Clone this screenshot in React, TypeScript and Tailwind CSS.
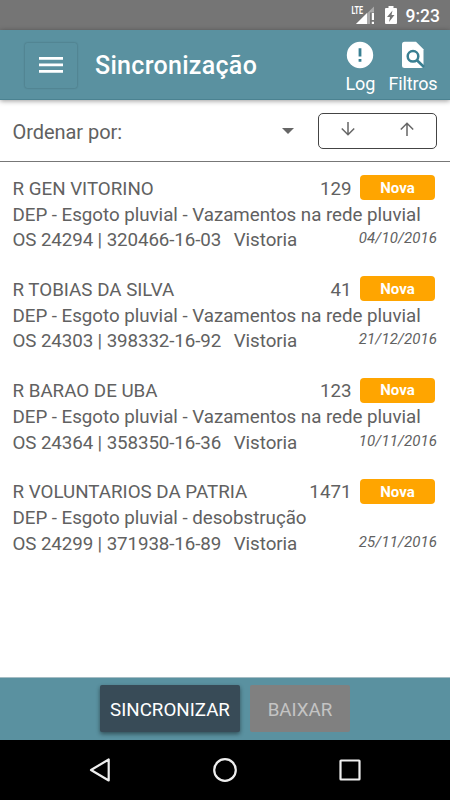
import React from 'react';

type Order = { street: string; number: string; service: string; code: string; date: string };

const orders: Order[] = [
  { street: 'R GEN VITORINO', number: '129', service: 'DEP - Esgoto pluvial - Vazamentos na rede pluvial', code: 'OS 24294 | 320466-16-03', date: '04/10/2016' },
  { street: 'R TOBIAS DA SILVA', number: '41', service: 'DEP - Esgoto pluvial - Vazamentos na rede pluvial', code: 'OS 24303 | 398332-16-92', date: '21/12/2016' },
  { street: 'R BARAO DE UBA', number: '123', service: 'DEP - Esgoto pluvial - Vazamentos na rede pluvial', code: 'OS 24364 | 358350-16-36', date: '10/11/2016' },
  { street: 'R VOLUNTARIOS DA PATRIA', number: '1471', service: 'DEP - Esgoto pluvial - desobstrução', code: 'OS 24299 | 371938-16-89', date: '25/11/2016' },
];

function StatusBar() {
  return (
    <div className="flex h-[30px] shrink-0 items-center justify-end bg-[#757575] pr-[10px] text-white">
      <svg className="mr-[10px] h-[30px] w-[24px]" viewBox="0 0 24 30">
        <text x="0.5" y="14" fontSize="11" fontWeight="700" fontFamily="Roboto, sans-serif" fill="#fff" textLength="11.5" lengthAdjust="spacingAndGlyphs">LTE</text>
        <path d="M23 6.500v6h-4v11.500H5z" fill="#a9a9a9" />
        <path d="M16 13v11H5z" fill="#fff" />
        <path d="M20.800 13h2.200v7h-2.200zM20.800 21.700h2.200v2.300h-2.200z" fill="#fff" />
      </svg>
      <svg className="mr-[9px] h-[30px] w-[12px]" viewBox="0 0 12 30">
        <path d="M3.500 6h5v2H11q1 0 1 1v14q0 1-1 1H1q-1 0-1-1V9q0-1 1-1h2.500z" fill="#fff" />
        <path d="M7.500 10.500 2 17h3l-1 5 5.500-7H6.500z" fill="#757575" />
      </svg>
      <span className="pt-[1px] text-[17.500px] font-medium leading-[28px]">9:23</span>
    </div>
  );
}

function Header() {
  return (
    <header className="relative flex h-[70px] shrink-0 items-center bg-[#5a91a0] pl-[25px] text-white shadow-[0_1px_5px_rgba(0,0,0,0.4),inset_0_-1px_0_#4b8291]">
      <button aria-label="Menu" className="flex h-[45px] w-[52px] items-center justify-center rounded-[2px] shadow-[0_0_2px_rgba(0,0,0,0.3)]">
        <svg className="h-[16px] w-[24px]" viewBox="0 0 24 16" fill="#fff">
          <path d="M0 0h24v2.700H0zM0 6.500h24v2.700H0zM0 13h24v2.700H0z" />
        </svg>
      </button>
      <h1 className="ml-[18px] pt-[2px] text-[25px] font-medium leading-[30px] tracking-[0.300px]">Sincronização</h1>
      <div className="ml-auto flex gap-[13px] pr-[12.500px] pt-[7px]">
        <div className="flex flex-col items-center">
          <svg className="h-[30px] w-[30px]" viewBox="0 0 30 30">
            <circle cx="15" cy="15" r="13.200" fill="#fff" />
            <path d="M13.600 8.200h2.800v8.300h-2.800zM13.600 19h2.800v2.800h-2.800z" fill="#397f92" />
          </svg>
          <span className="text-[18px] leading-[28px]">Log</span>
        </div>
        <div className="flex flex-col items-center">
          <svg className="h-[30px] w-[30px]" viewBox="0 0 30 30">
            <path d="M6.500 1.800H18l7.500 7.500v16.200q0 2.500-2.500 2.500H6.500Q4 28 4 25.500V4.300Q4 1.800 6.500 1.800z" fill="#fff" />
            <circle cx="15" cy="16.300" r="5.300" fill="none" stroke="#397f92" strokeWidth="2.500" />
            <path d="m18.700 20 7.300 7" stroke="#397f92" strokeWidth="2.600" />
          </svg>
          <span className="text-[18px] leading-[28px] tracking-[-0.150px]">Filtros</span>
        </div>
      </div>
    </header>
  );
}

function SortBar() {
  return (
    <div className="flex h-[62px] shrink-0 items-center border-b-[1.500px] border-[#777] pl-[12.500px] pr-[13px]">
      <span className="pt-[2px] text-[20px] leading-[24px] tracking-[-0.050px]">Ordenar por:</span>
      <svg className="ml-auto mr-[24px] h-[6px] w-[12px]" viewBox="0 0 12 6"><path d="M0 0h12L6 6z" fill="#666" /></svg>
      <div className="flex h-[36px] w-[119px] items-center justify-around rounded-[5px] border border-[#444] pb-[3px]">
        {[false, true].map((up) => (
          <svg key={String(up)} className={up ? 'h-[14px] w-[14px]' : 'h-[14px] w-[14px] rotate-180'} viewBox="0 0 14 14" fill="none" stroke="#666" strokeWidth="1.500">
            <path d="M7 14V1.500M.8 7.500 7 1.300l6.200 6.200" />
          </svg>
        ))}
      </div>
    </div>
  );
}

function OrderItem({ order }: { order: Order }) {
  return (
    <li className="h-[101.300px] pl-[12.500px] pr-[13px] text-[18.750px] leading-[25.400px]">
      <div className="flex h-[27.500px] items-start">
        <span className="pt-[1.600px]">{order.street}</span>
        <span className="ml-auto pt-[1.600px]">{order.number}</span>
        <span className="ml-[8.500px] mr-[2px] flex h-[25px] w-[75px] items-center justify-center rounded-[4px] bg-[#ffa500] pt-[2px] text-[15px] font-bold text-white">Nova</span>
      </div>
      <div className="whitespace-nowrap tracking-[-0.030px]">{order.service}</div>
      <div className="flex">
        <span className="tracking-[-0.100px]">{order.code}</span>
        <span className="ml-[12.500px] tracking-[-0.050px]">Vistoria</span>
        <span className="ml-auto text-[15px] italic leading-[20px] tracking-[0.080px]">{order.date}</span>
      </div>
    </li>
  );
}

export default function App() {
  return (
    <div className="flex h-[800px] w-[450px] flex-col overflow-hidden bg-white font-[Roboto,sans-serif] text-[#616161]">
      <StatusBar />
      <Header />
      <SortBar />
      <ul className="min-h-0 flex-1 pt-[13px]">
        {orders.map((order) => <OrderItem key={order.code} order={order} />)}
      </ul>
      <footer className="flex h-[63px] shrink-0 justify-center gap-[10px] border-t border-[#a5bdc4] bg-[#5a91a0] pt-[7px] text-[18.750px]">
        <button className="h-[47px] w-[140px] rounded-[2px] bg-[#384b57] pt-[3px] text-white shadow-[0_2px_4px_rgba(0,0,0,0.45)]">SINCRONIZAR</button>
        <button className="h-[47px] w-[100px] rounded-[2px] bg-[#808080] pt-[3px] text-[#c4c4c4]" disabled>BAIXAR</button>
      </footer>
      <nav className="flex h-[60px] shrink-0 items-center justify-center bg-black">
        <svg className="h-[60px] w-[450px]" viewBox="0 0 450 60" fill="none" stroke="#eee" strokeWidth="2.200">
          <path d="M108.700 19.500v21L91 30z" strokeLinejoin="round" />
          <circle cx="225" cy="30" r="10.800" />
          <rect x="340.500" y="20.500" width="19" height="19" rx="0.500" />
        </svg>
      </nav>
    </div>
  );
}
